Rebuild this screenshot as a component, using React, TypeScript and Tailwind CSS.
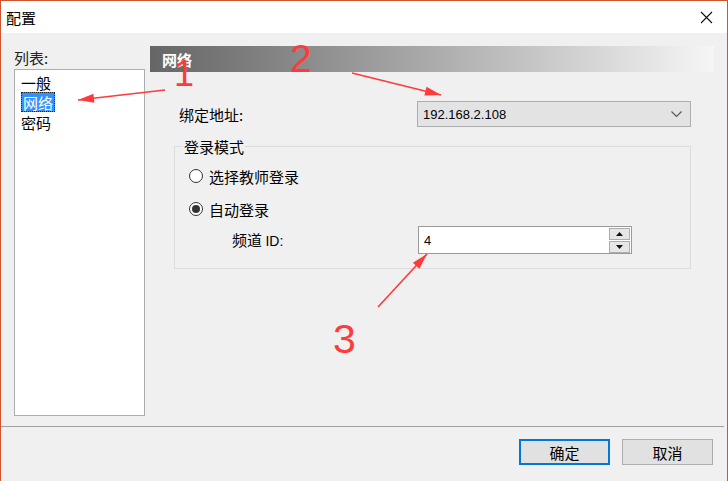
import React from 'react';

const cjk = { fontFamily: '"Noto Sans CJK SC", "Liberation Sans", sans-serif' };
const latin = { fontFamily: '"Liberation Sans", "Noto Sans CJK SC", sans-serif' };

type Pt = [number, number];

// arrowhead polygon pointing from `from` to `to`
const head = (from: Pt, to: Pt, len = 16, half = 4.5) => {
  const dx = to[0] - from[0];
  const dy = to[1] - from[1];
  const d = Math.hypot(dx, dy);
  const ux = dx / d;
  const uy = dy / d;
  const bx = to[0] - ux * len;
  const by = to[1] - uy * len;
  return `${to[0]},${to[1]} ${bx - uy * half},${by + ux * half} ${bx + uy * half},${by - ux * half}`;
};

const arrows: { from: Pt; to: Pt }[] = [
  { from: [165, 90], to: [78, 100] },
  { from: [352, 73], to: [441, 95] },
  { from: [378, 307], to: [427, 254] },
];

const Radio = ({ checked, label }: { checked?: boolean; label: string }) => (
  <div className="flex h-[20px] items-center gap-[6px] pl-[14px]">
    <span className="flex h-[14px] w-[14px] items-center justify-center rounded-full border border-[#333] bg-white">
      {checked && <span className="h-[8px] w-[8px] rounded-full bg-[#333]" />}
    </span>
    <span className="text-[15px] leading-none text-black" style={cjk}>{label}</span>
  </div>
);

const App = () => {
  return (
    <div className="relative flex h-[481px] w-[728px] flex-col overflow-hidden border-x border-t border-[#d4532c] bg-[#f0f0f0]">
      {/* title bar */}
      <div className="flex h-[32px] shrink-0 items-center justify-between bg-white pl-[5px] pr-[14px]">
        <span className="text-[15px] leading-none text-black" style={cjk}>配置</span>
        <svg width="13" height="13" viewBox="0 0 13 13">
          <path d="M1 1 L12 12 M12 1 L1 12" stroke="#111" strokeWidth="1.1" />
        </svg>
      </div>

      {/* main */}
      <div className="flex h-[393px] shrink-0">
        {/* left list */}
        <div className="ml-[13px] flex w-[131px] flex-col pt-[14px]">
          <div className="flex h-[20px] items-center text-[15px] leading-none text-[#222]" style={cjk}>列表:</div>
          <div className="mt-[2px] h-[347px] border border-[#abadb3] bg-white pl-[6px] pt-[2px]">
            <div className="flex h-[20px] items-center text-[15px] leading-none text-black" style={cjk}>一般</div>
            <div className="flex h-[20px] items-center">
              <span className="flex h-[20px] items-center border border-dotted border-[#222] bg-[#3390ff] px-[1px] text-[15px] leading-none text-white" style={cjk}>网络</span>
            </div>
            <div className="flex h-[20px] items-center text-[15px] leading-none text-black" style={cjk}>密码</div>
          </div>
        </div>

        {/* right panel */}
        <div className="ml-[5px] flex w-[564px] flex-col pt-[13px]">
          <div className="flex h-[26px] items-center bg-gradient-to-r from-[#666666] to-[#f6f6f6] pl-[12px]">
            <span className="text-[15px] font-bold leading-none text-white" style={cjk}>网络</span>
          </div>

          <div className="mt-[29px] flex h-[26px] items-center">
            <span className="ml-[29px] w-[238px] text-[15px] leading-none text-black" style={cjk}>绑定地址:</span>
            <div className="flex h-[26px] w-[274px] items-center justify-between border border-[#adadad] bg-[#e3e3e3] pl-[5px] pr-[8px]">
              <span className="text-[13px] leading-none text-black" style={latin}>192.168.2.108</span>
              <svg width="11" height="7" viewBox="0 0 11 7">
                <path d="M0.5 0.5 L5.5 5.5 L10.5 0.5" stroke="#555" fill="none" strokeWidth="1.1" />
              </svg>
            </div>
          </div>

          <div className="relative ml-[24px] mt-[19px] w-[517px] border border-[#dcdcdc] pb-[14px] pt-[19px]">
            <span className="absolute -top-[10px] left-[8px] bg-[#f0f0f0] px-[1px] text-[15px] leading-[20px] text-black" style={cjk}>登录模式</span>
            <Radio label="选择教师登录" />
            <div className="mt-[13px]">
              <Radio checked label="自动登录" />
            </div>
            <div className="mt-[7px] flex h-[28px] items-center">
              <span className="ml-[57px] w-[186px] text-[15px] leading-none text-black" style={cjk}>
                频道 <span style={latin} className="text-[14px]">ID:</span>
              </span>
              <div className="flex h-[28px] w-[214px] items-center border border-[#9a9a9a] bg-white">
                <span className="flex-1 pl-[5px] text-[13px] leading-none text-black" style={latin}>4</span>
                <div className="mr-[1px] flex flex-col gap-[1px]">
                  <div className="flex h-[12px] w-[21px] items-center justify-center border border-[#adadad] bg-[#e6e6e6]">
                    <svg width="7" height="4" viewBox="0 0 7 4"><path d="M3.5 0 L7 4 L0 4 Z" fill="#111" /></svg>
                  </div>
                  <div className="flex h-[12px] w-[21px] items-center justify-center border border-[#adadad] bg-[#e6e6e6]">
                    <svg width="7" height="4" viewBox="0 0 7 4"><path d="M0 0 L7 0 L3.5 4 Z" fill="#111" /></svg>
                  </div>
                </div>
              </div>
            </div>
          </div>
        </div>
      </div>

      {/* separator */}
      <div className="mr-[3px] h-px shrink-0 bg-[#a0a0a0]" />

      {/* buttons */}
      <div className="flex justify-end gap-[12px] pr-[14px] pt-[12px]">
        <button className="flex h-[26px] w-[91px] items-center justify-center border-2 border-[#0078d7] bg-[#e1e1e1] text-[15px] leading-none text-black" style={cjk}>确定</button>
        <button className="flex h-[26px] w-[91px] items-center justify-center border border-[#adadad] bg-[#e1e1e1] text-[15px] leading-none text-black" style={cjk}>取消</button>
      </div>

      {/* annotations */}
      <svg className="pointer-events-none absolute -left-px -top-px" width="728" height="481" viewBox="0 0 728 481">
        {arrows.map((a, i) => (
          <g key={i}>
            <line x1={a.from[0]} y1={a.from[1]} x2={a.to[0]} y2={a.to[1]} stroke="#ff3a3a" strokeWidth="1.6" />
            <polygon points={head(a.from, a.to)} fill="#ff3a3a" />
          </g>
        ))}
        <text x="174" y="86" fill="#ff3a3a" fontSize="36" style={latin}>1</text>
        <text x="290" y="72" fill="#ff3a3a" fontSize="39" style={latin}>2</text>
        <text x="333" y="353" fill="#ff3a3a" fontSize="41" style={latin}>3</text>
      </svg>
    </div>
  );
};

export default App;
